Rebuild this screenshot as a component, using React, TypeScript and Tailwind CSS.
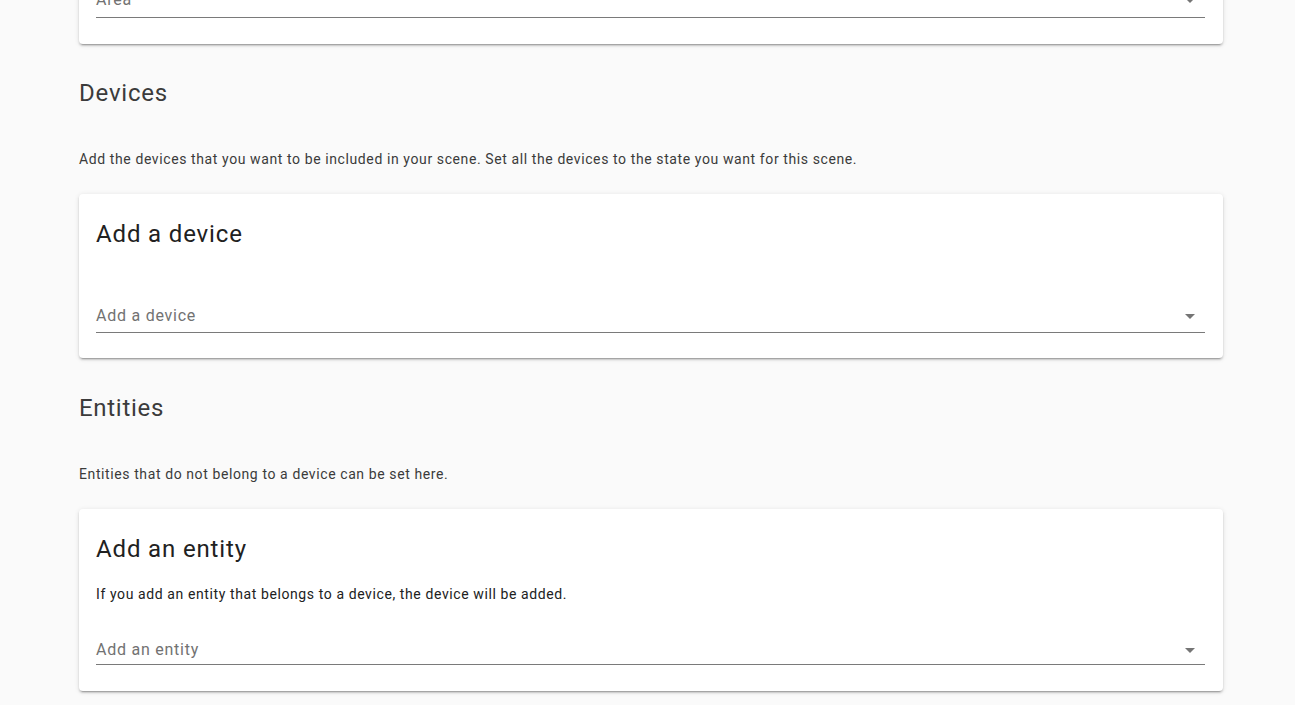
import React from 'react';

const cardClass =
  'bg-white rounded-[4px] pl-[17px] pr-[18px] shadow-[0_2px_2px_0_rgba(0,0,0,0.14),0_1px_5px_0_rgba(0,0,0,0.12),0_3px_1px_-2px_rgba(0,0,0,0.2)]';

function MenuDown() {
  return (
    <svg viewBox="0 0 24 24" className="w-6 h-6 mr-[3px] shrink-0" fill="#757575">
      <path d="M7,10L12,15L17,10H7Z" />
    </svg>
  );
}

function Picker({ label, top, gap }: { label: string; top: string; gap: string }) {
  return (
    <div className={top}>
      <div className="flex items-center h-6">
        <span className="flex-1 text-[16px] leading-6 tracking-[0.75px] text-[#727272]">{label}</span>
        <MenuDown />
      </div>
      <div className={`${gap} h-px bg-[#7a7a7a]`} />
    </div>
  );
}

export default function App() {
  return (
    <div
      className="min-h-[705px] bg-[#fafafa] overflow-hidden"
      style={{ fontFamily: 'Roboto, "Liberation Sans", sans-serif' }}
    >
      <div className="ml-[79px] w-[1144px]">
        {/* area card, scrolled mostly out of view */}
        <div className={`${cardClass} -mt-[28px] pt-4 pb-[26px]`}>
          <Picker label="Area" top="" gap="mt-[5px]" />
        </div>

        {/* devices */}
        <h2 className="mt-[33px] text-[24px] leading-8 tracking-[0.8px] font-normal text-[#3b3b3b]">Devices</h2>
        <p className="mt-[40px] text-[14px] leading-5 tracking-[0.6px] text-[#3b3b3b]">
          Add the devices that you want to be included in your scene. Set all the devices to the state you want for this scene.
        </p>
        <div className={`${cardClass} mt-[25px] pt-6 pb-[25px]`}>
          <div className="text-[24px] leading-8 tracking-[0.85px] text-[#212121]">Add a device</div>
          <Picker label="Add a device" top="mt-[54px]" gap="mt-[4px]" />
        </div>

        {/* entities */}
        <h2 className="mt-[34px] text-[24px] leading-8 tracking-[0.7px] font-normal text-[#3b3b3b]">Entities</h2>
        <p className="mt-[40px] text-[14px] leading-5 tracking-[0.6px] text-[#3b3b3b]">
          Entities that do not belong to a device can be set here.
        </p>
        <div className={`${cardClass} mt-[25px] pt-6 pb-[26px]`}>
          <div className="text-[24px] leading-8 tracking-[0.85px] text-[#212121]">Add an entity</div>
          <p className="mt-[19px] text-[14px] leading-5 tracking-[0.6px] text-[#212121]">
            If you add an entity that belongs to a device, the device will be added.
          </p>
          <Picker label="Add an entity" top="mt-[34px]" gap="mt-[2px]" />
        </div>
        <div className="h-10" />
      </div>
    </div>
  );
}
